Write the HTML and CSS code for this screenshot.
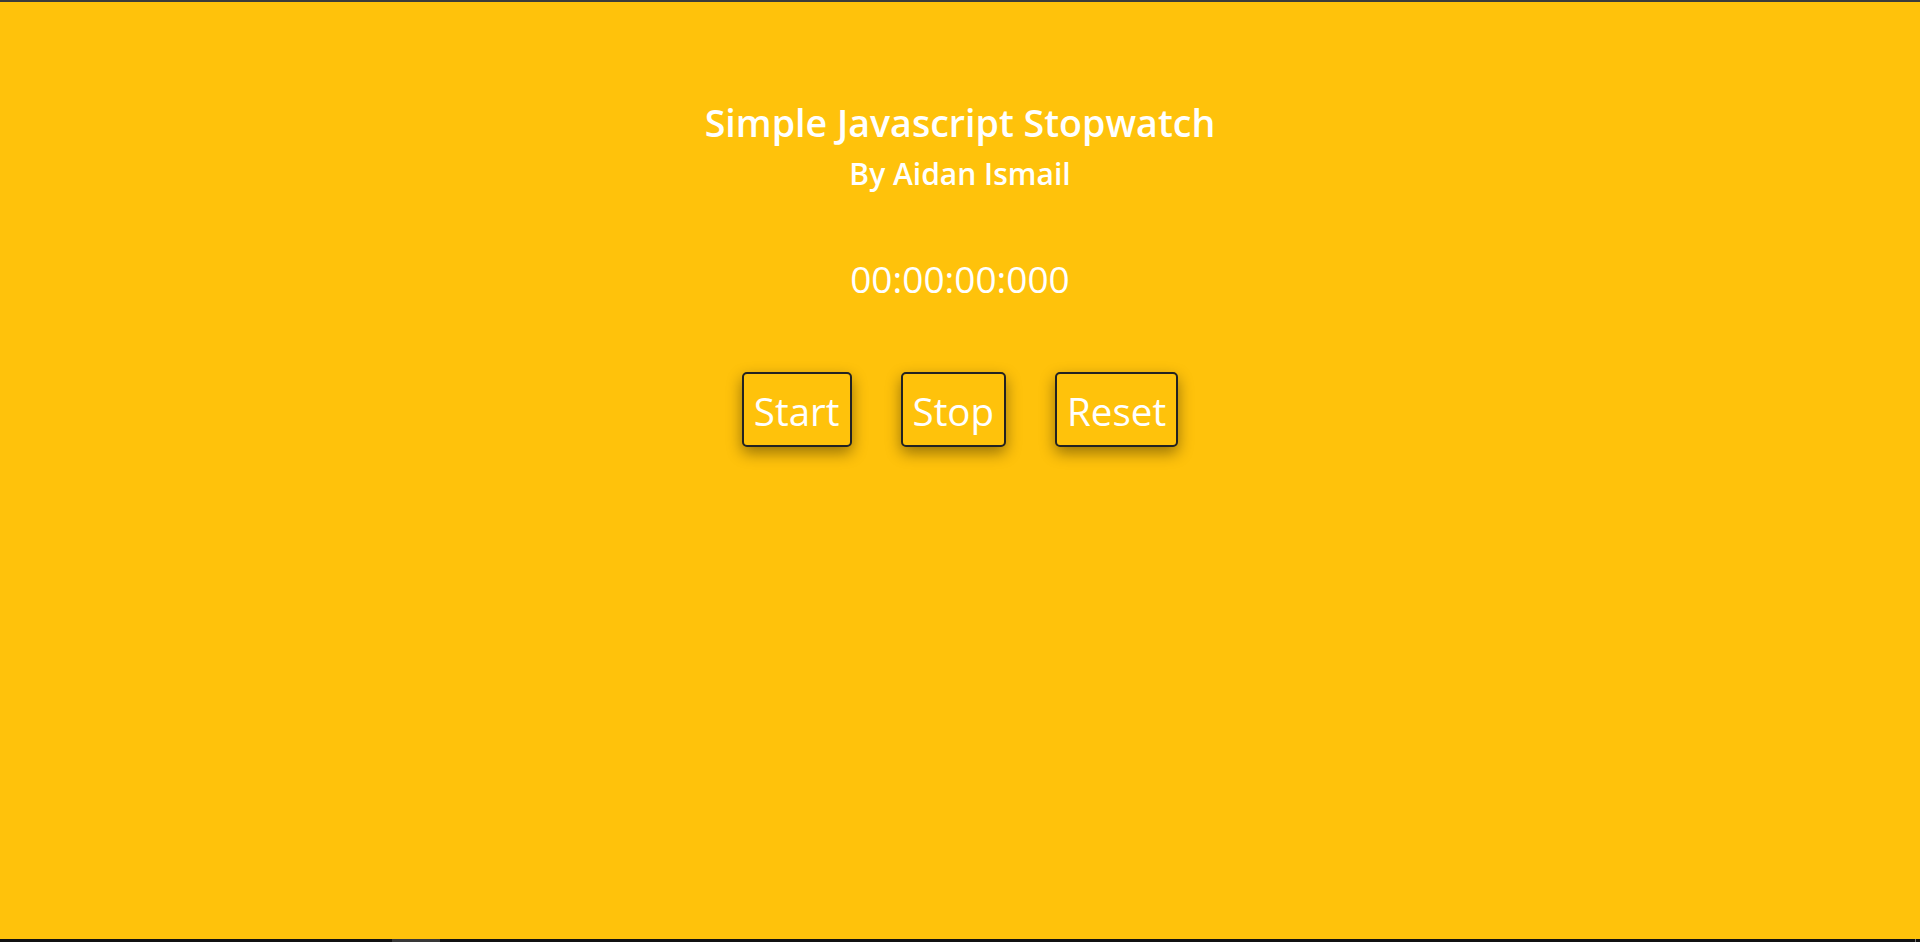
FILE: index.html
```html
<!DOCTYPE html>
<html lang="en">
<head>
<meta charset="utf-8">
<title>Simple Javascript Stopwatch</title>
<link rel="stylesheet" href="styles.css">
</head>
<body>
<div class="page">
  <header class="header">
    <h1 class="title">Simple Javascript Stopwatch</h1>
    <h2 class="subtitle">By Aidan Ismail</h2>
  </header>
  <div class="timer">00:00:00:000</div>
  <div class="controls">
    <button class="btn">Start</button>
    <button class="btn">Stop</button>
    <button class="btn">Reset</button>
  </div>
</div>
<div class="bottom-bar"><span class="thumb"></span><span class="tick"></span></div>
</body>
</html>
```

FILE: styles.css
```css
html, body {
  margin: 0;
  padding: 0;
  height: 100%;
}
body {
  background: #ffc20b;
  font-family: "Open Sans", "Noto Sans", sans-serif;
  color: #ffffff;
  border-top: 2px solid #3b3b3b;
  box-sizing: border-box;
  display: flex;
  flex-direction: column;
  overflow: hidden;
}
.page {
  flex: 1;
  display: flex;
  flex-direction: column;
  align-items: center;
}
.header {
  display: flex;
  flex-direction: column;
  align-items: center;
  margin-top: 95px;
}
.title {
  margin: 0;
  font-size: 37.6px;
  font-weight: 600;
  line-height: 52px;
}
.subtitle {
  margin: 5px 0 0;
  font-size: 30px;
  font-weight: 600;
  line-height: 40px;
}
.timer {
  margin-top: 60px;
  font-size: 37px;
  font-weight: 400;
  line-height: 50px;
}
.controls {
  display: flex;
  gap: 49px;
  margin-top: 68px;
}
.btn {
  font-family: inherit;
  font-size: 38.5px;
  color: #ffffff;
  background: #ffc20b;
  border: 2px solid #222222;
  border-radius: 5px;
  padding: 12px 10px 9px;
  line-height: 50px;
  box-shadow: 0 6px 15px rgba(0, 0, 0, 0.4);
  cursor: pointer;
}
.bottom-bar {
  height: 3px;
  background: #111111;
  position: relative;
  flex: none;
}
.thumb {
  position: absolute;
  left: 392px;
  width: 48px;
  top: 0;
  bottom: 0;
  background: #383838;
}
.tick {
  position: absolute;
  left: 1915px;
  width: 1px;
  top: 0;
  bottom: 0;
  background: #777777;
}
```
